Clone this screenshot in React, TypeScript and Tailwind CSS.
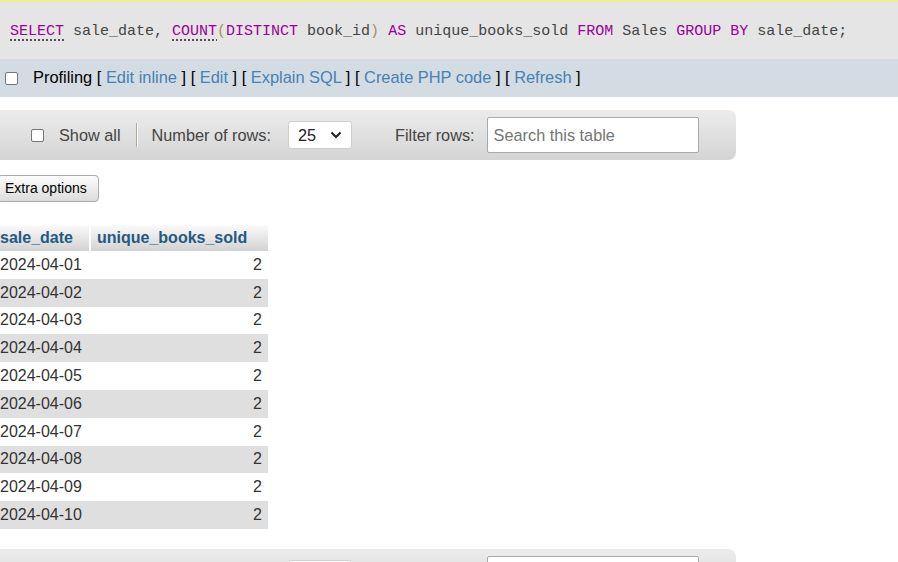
import React from "react";

const rows = [
  "2024-04-01",
  "2024-04-02",
  "2024-04-03",
  "2024-04-04",
  "2024-04-05",
  "2024-04-06",
  "2024-04-07",
  "2024-04-08",
  "2024-04-09",
  "2024-04-10",
];

function Box({ className = "" }: { className?: string }) {
  return (
    <span
      className={`inline-block w-[13px] h-[13px] rounded-[2px] border border-[#767676] bg-white shrink-0 ${className}`}
    />
  );
}

function Kw({ children, dotted }: { children: React.ReactNode; dotted?: boolean }) {
  return (
    <span
      className={`text-[#990099] ${dotted ? "underline decoration-dotted decoration-[#222] underline-offset-[5px]" : ""}`}
    >
      {children}
    </span>
  );
}

function Lnk({ children }: { children: React.ReactNode }) {
  return <span className="text-[#4682b4]">{children}</span>;
}

function NavBar({ className = "" }: { className?: string }) {
  return (
    <div
      className={`w-[736px] h-[50px] rounded-r-[8px] bg-gradient-to-b from-[#ececec] to-[#d4d4d4] flex items-center text-[16.3px] text-[#444] ${className}`}
    >
      <Box className="ml-[31px]" />
      <span className="ml-[15px]">Show all</span>
      <span className="ml-[15px] w-[2px] h-[24px] bg-[#b0a898] border-r border-white" />
      <span className="ml-[14px]">Number of rows:</span>
      <div className="ml-[17px] w-[64px] h-[28px] bg-white border border-[#cfcfcf] rounded-[3px] flex items-center justify-between pl-[9px] pr-[9px] text-[#222]">
        <span>25</span>
        <svg width="12" height="8" viewBox="0 0 12 8">
          <path d="M1.5 1.5 L6 6 L10.5 1.5" fill="none" stroke="#222" strokeWidth="2.2" />
        </svg>
      </div>
      <span className="ml-[43px]">Filter rows:</span>
      <div className="ml-[12px] w-[212px] h-[36px] bg-white border border-[#a9a9a9] rounded-[2px] flex items-center pl-[6px] text-[#757575]">
        Search this table
      </div>
    </div>
  );
}

export default function App() {
  return (
    <div className="w-[898px] h-[562px] overflow-hidden bg-white font-['Liberation_Sans',Arial,sans-serif]">
      <div className="h-[2px] bg-[#eaf28e]" />
      <div className="h-[57px] bg-[#e5e5e5] flex items-center pl-[10px] pt-[3px] font-['Liberation_Mono',monospace] text-[15px] text-[#444] whitespace-pre">
        <Kw dotted>SELECT</Kw>
        <span> sale_date, </span>
        <Kw dotted>COUNT</Kw>
        <span className="text-[#a89070]">(</span>
        <Kw>DISTINCT</Kw>
        <span> book_id</span>
        <span className="text-[#a89070]">)</span>
        <span> </span>
        <Kw>AS</Kw>
        <span> unique_books_sold </span>
        <Kw>FROM</Kw>
        <span> Sales </span>
        <Kw>GROUP BY</Kw>
        <span> sale_date;</span>
      </div>

      <div className="h-[38px] bg-[#d3dce3] flex items-center pl-[5px] text-[16.4px] text-black whitespace-pre">
        <Box />
        <span className="ml-[15px] -mt-[1px]">
          Profiling [ <Lnk>Edit inline</Lnk> ] [ <Lnk>Edit</Lnk> ] [ <Lnk>Explain SQL</Lnk> ] [{" "}
          <Lnk>Create PHP code</Lnk> ] [ <Lnk>Refresh</Lnk> ]
        </span>
      </div>

      <NavBar className="mt-[13px]" />

      <div className="mt-[15px] -ml-[3px] w-[102px] h-[27px] rounded-[4px] border border-[#aaa] bg-gradient-to-b from-[#fdfdfd] to-[#dcdcdc] text-[14px] text-black flex items-center pl-[7px]">
        Extra options
      </div>

      <div className="mt-[23px] -ml-[5px] grid grid-cols-[94px_177px] gap-x-[2px] text-[16px]">
        <div className="h-[26px] bg-gradient-to-b from-[#fbfbfb] to-[#d2d2d2] font-bold text-[#235a81] pl-[5px] flex items-center">
          sale_date
        </div>
        <div className="h-[26px] bg-gradient-to-b from-[#fbfbfb] to-[#d2d2d2] font-bold text-[#235a81] pl-[6px] flex items-center">
          unique_books_sold
        </div>
        {rows.map((d, i) => (
          <React.Fragment key={d}>
            <div
              className={`h-[27.8px] pl-[5px] flex items-center text-[#333] ${i % 2 ? "bg-[#dfdfdf]" : "bg-white"}`}
            >
              {d}
            </div>
            <div
              className={`h-[27.8px] pr-[6px] flex items-center justify-end text-[#333] -ml-[2px] pl-[2px] box-content ${i % 2 ? "bg-[#dfdfdf]" : "bg-white"}`}
            >
              2
            </div>
          </React.Fragment>
        ))}
      </div>

      <NavBar className="mt-[20px]" />
    </div>
  );
}
